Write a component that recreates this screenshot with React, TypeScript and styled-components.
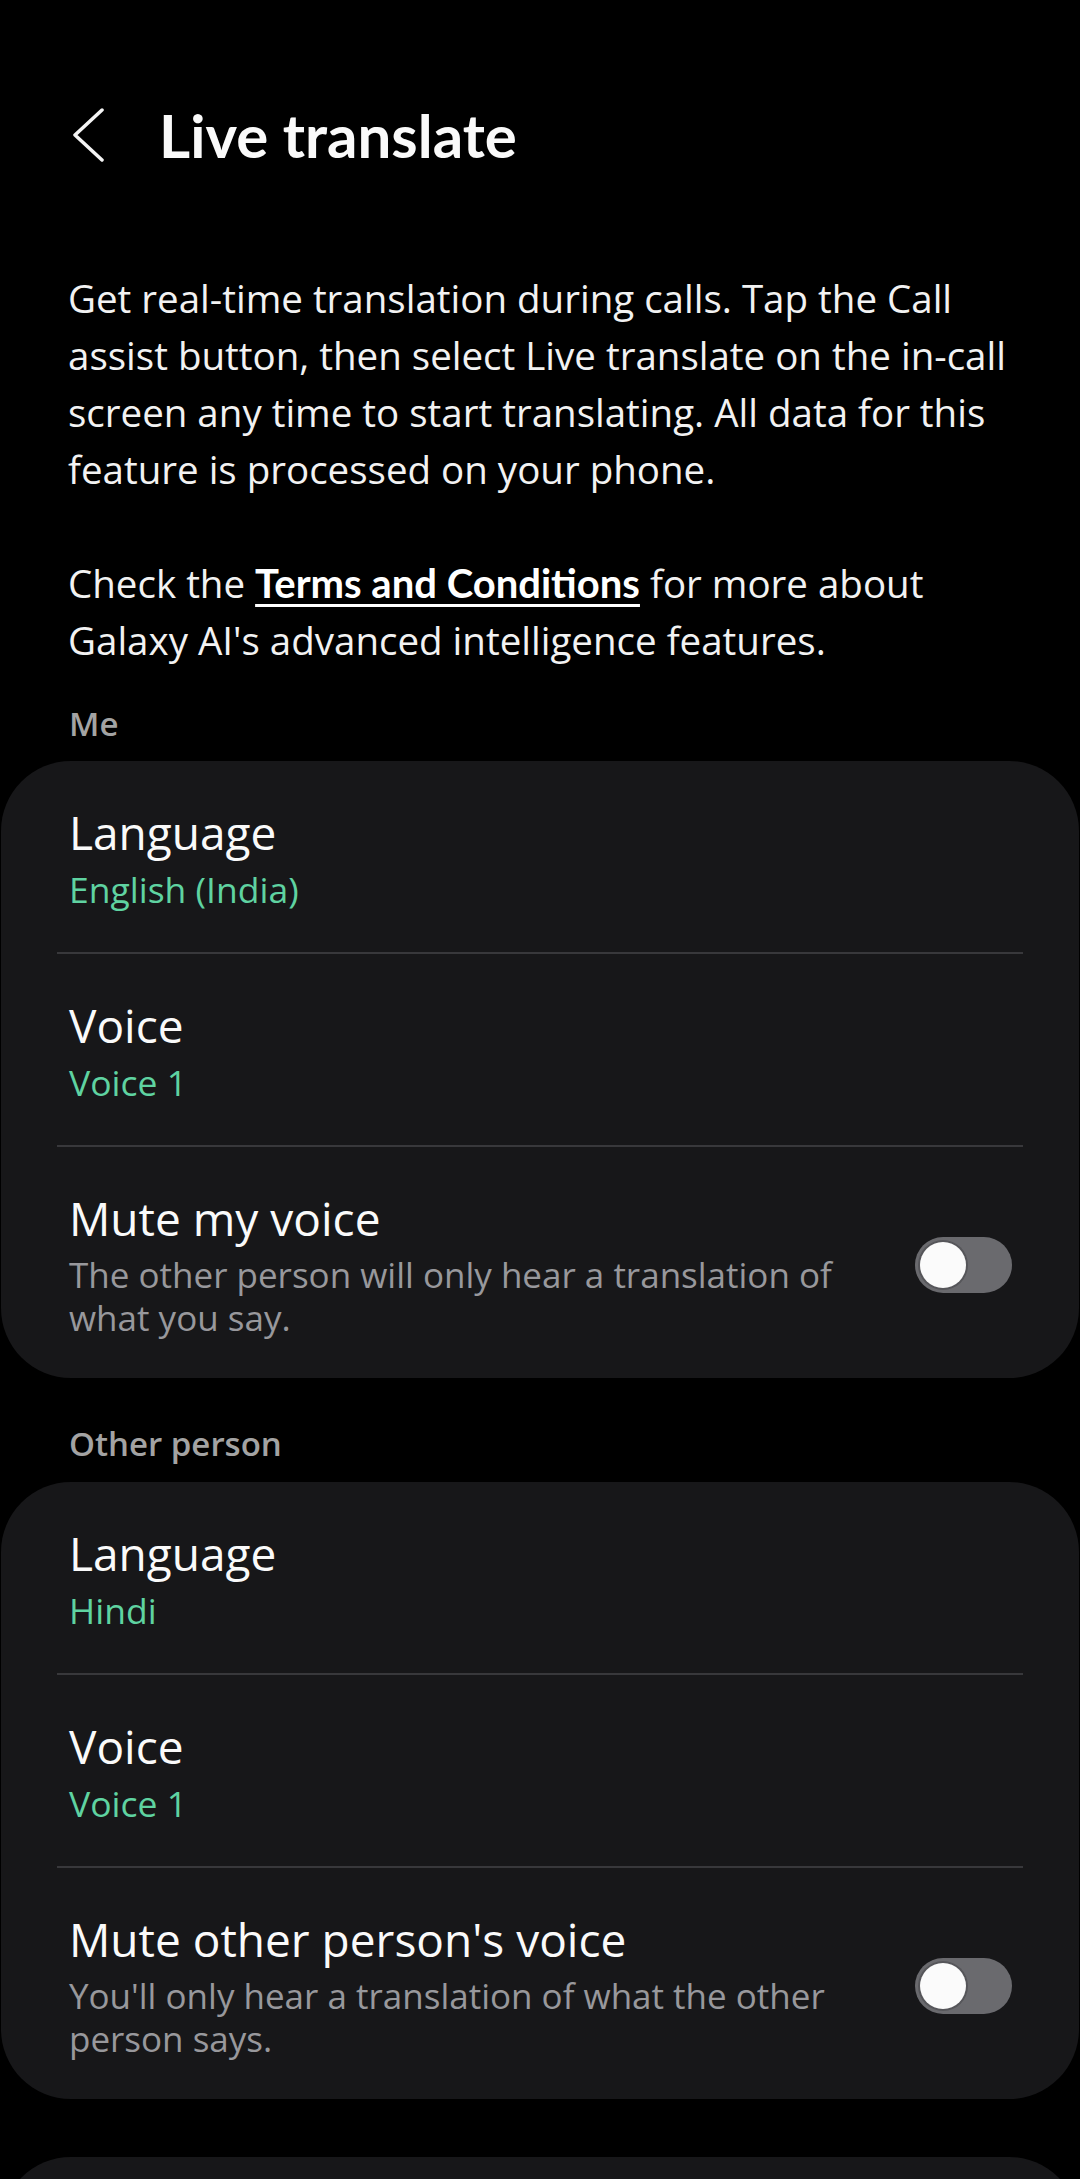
import React from "react";
import styled, { createGlobalStyle } from "styled-components";

const GlobalStyle = createGlobalStyle`
  html, body {
    margin: 0;
    padding: 0;
    background: #000;
  }
  body {
    font-family: "Open Sans", "Noto Sans", sans-serif;
    -webkit-font-smoothing: antialiased;
  }
`;

const Page = styled.div`
  width: 1080px;
  height: 2179px;
  background: #000;
  color: #f7f7f7;
  overflow: hidden;
`;

const TopBar = styled.header`
  display: flex;
  align-items: center;
  height: 72px;
  padding: 99px 0 0 73px;
`;

const BackButton = styled.button`
  display: flex;
  padding: 0;
  margin: 0 54px 0 0;
  background: none;
  border: none;
  cursor: pointer;
`;

const Title = styled.h1`
  margin: 0;
  font-family: Lato, "Open Sans", sans-serif;
  font-size: 60px;
  line-height: 72px;
  font-weight: 700;
  color: #fafafa;
`;

const Intro = styled.div`
  padding: 99px 50px 0 68px;
`;

const Para = styled.p<{ $gap?: boolean }>`
  margin: ${(p) => (p.$gap ? "57px" : "0")} 0 0;
  font-size: 38.5px;
  line-height: 57px;
  color: #f2f2f2;
`;

const Link = styled.a`
  font-family: Lato, "Open Sans", sans-serif;
  font-size: 40px;
  color: #fff;
  font-weight: 700;
  text-decoration: underline;
  text-decoration-thickness: 3px;
  text-underline-offset: 6px;
`;

const SectionLabel = styled.div<{ $top: number }>`
  margin-top: ${(p) => p.$top}px;
  padding-left: 69px;
  font-size: 33px;
  line-height: 40px;
  font-weight: 600;
  color: #a3a3a3;
`;

const Card = styled.section<{ $top: number }>`
  margin: ${(p) => p.$top}px 1px 0;
  background: #171719;
  border-radius: 70px;
`;

const Row = styled.div`
  display: flex;
  align-items: center;
  padding: 43px 67px 40px 68px;
`;

const ToggleRowBox = styled(Row)`
  padding-bottom: 39px;
`;

const RowText = styled.div`
  flex: 1;
  min-width: 0;
`;

const RowTitle = styled.div`
  font-size: 46px;
  line-height: 56px;
  color: #fafafa;
`;

const RowValue = styled.div`
  margin-top: 6px;
  font-size: 35.5px;
  line-height: 46px;
  color: #5fd3a1;
`;

const RowDesc = styled.div`
  margin-top: 7px;
  font-size: 35px;
  line-height: 43px;
  color: #98989c;
`;

const Divider = styled.div`
  height: 2px;
  margin: 0 56px;
  background: #38383b;
`;

const Track = styled.div<{ $on?: boolean }>`
  flex: none;
  position: relative;
  width: 97px;
  height: 56px;
  margin-left: 40px;
  border-radius: 28px;
  background: ${(p) => (p.$on ? "#3e91ff" : "#6a6a6e")};
`;

const Thumb = styled.span<{ $on?: boolean }>`
  position: absolute;
  top: 5px;
  left: ${(p) => (p.$on ? "46px" : "5px")};
  width: 46px;
  height: 46px;
  border-radius: 50%;
  background: #fbfbfb;
  box-shadow: 0 0 0 2px #56565a;
`;

const Chevron = () => (
  <svg width="32" height="54" viewBox="0 0 32 54" fill="none">
    <path
      d="M29 2 L2 27 L29 52"
      stroke="#f5f5f5"
      strokeWidth="3.5"
      strokeLinecap="round"
      strokeLinejoin="round"
    />
  </svg>
);

const ValueRow = ({ title, value }: { title: string; value: string }) => (
  <Row>
    <RowText>
      <RowTitle>{title}</RowTitle>
      <RowValue>{value}</RowValue>
    </RowText>
  </Row>
);

const ToggleRow = ({ title, desc }: { title: string; desc: string }) => (
  <ToggleRowBox>
    <RowText>
      <RowTitle>{title}</RowTitle>
      <RowDesc>{desc}</RowDesc>
    </RowText>
    <Track>
      <Thumb />
    </Track>
  </ToggleRowBox>
);

export default function App() {
  return (
    <Page>
      <GlobalStyle />
      <TopBar>
        <BackButton aria-label="Back">
          <Chevron />
        </BackButton>
        <Title>Live translate</Title>
      </TopBar>

      <Intro>
        <Para>
          Get real-time translation during calls. Tap the Call assist button, then select Live
          translate on the in-call screen any time to start translating. All data for this
          feature is processed on your phone.
        </Para>
        <Para $gap>
          Check the <Link>Terms and Conditions</Link> for more about Galaxy AI's advanced
          intelligence features.
        </Para>
      </Intro>

      <SectionLabel $top={35}>Me</SectionLabel>
      <Card $top={17}>
        <ValueRow title="Language" value="English (India)" />
        <Divider />
        <ValueRow title="Voice" value="Voice 1" />
        <Divider />
        <ToggleRow
          title="Mute my voice"
          desc="The other person will only hear a translation of what you say."
        />
      </Card>

      <SectionLabel $top={46}>Other person</SectionLabel>
      <Card $top={18}>
        <ValueRow title="Language" value="Hindi" />
        <Divider />
        <ValueRow title="Voice" value="Voice 1" />
        <Divider />
        <ToggleRow
          title="Mute other person's voice"
          desc="You'll only hear a translation of what the other person says."
        />
      </Card>

      <Card $top={58} style={{ height: 200 }} />
    </Page>
  );
}
